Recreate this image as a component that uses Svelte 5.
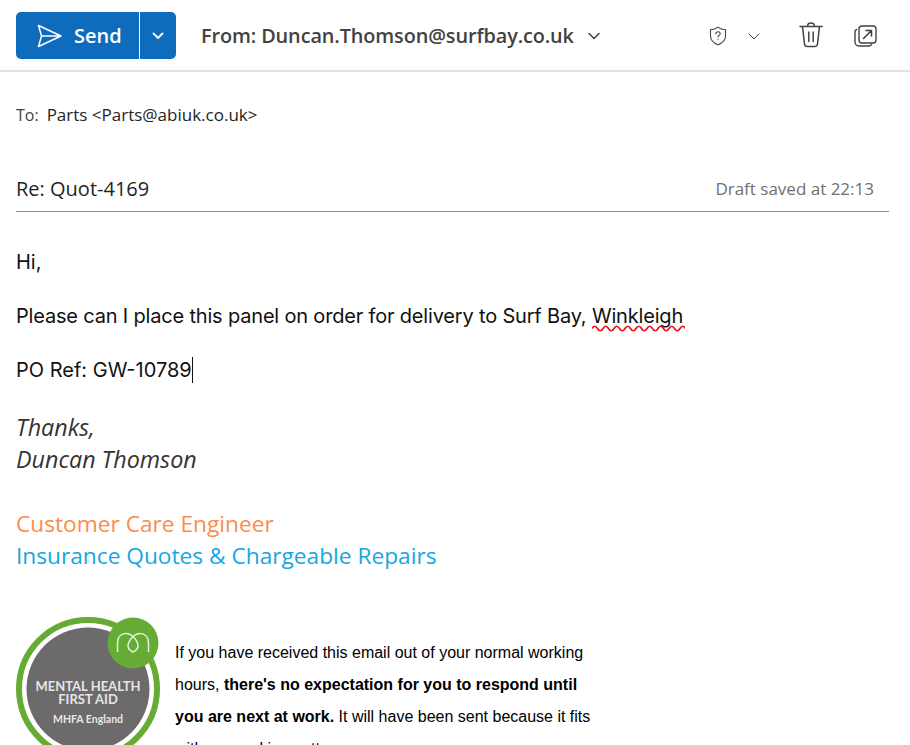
<script lang="ts">
	// Outlook-style reply compose pane
	const notice = 'If you have received this email out of your normal working';
	const wave = 'M0 3.500q2.750-4.500 5.500 0' + ' t5.500 0'.repeat(16);
</script>

<div class="pane">
	<header class="toolbar">
		<div class="send">
			<button class="send-main">
				<svg width="26" height="24" viewBox="0 0 26 24" fill="none" stroke="#fff" stroke-width="1.5" stroke-linejoin="round">
					<path d="M1.5 1.5 24 12 1.5 22.5 4.5 12ZM4.5 12H24" />
				</svg>
				<span>Send</span>
			</button>
			<button class="send-more" aria-label="More send options">
				<svg width="12" height="8" viewBox="0 0 12 8" fill="none" stroke="#fff" stroke-width="1.8" stroke-linecap="round" stroke-linejoin="round">
					<path d="M1.5 1.5 6 6l4.5-4.5" />
				</svg>
			</button>
		</div>
		<div class="from">
			<span>From: Duncan.Thomson@surfbay.co.uk</span>
			<svg width="12" height="8" viewBox="0 0 12 8" fill="none" stroke="#424242" stroke-width="1.5" stroke-linecap="round" stroke-linejoin="round">
				<path d="M1 1.5 6 6.5l5-5" />
			</svg>
		</div>
		<div class="actions">
			<div class="shield">
				<svg width="18" height="20" viewBox="0 0 18 20" fill="none" stroke="#424242" stroke-width="1.1">
					<path d="M9 1.2c2 1.7 4.500 2.500 7.500 2.600V10c0 4-2.500 6.800-7.500 8.800C4 16.800 1.500 14 1.500 10V3.800C4.500 3.700 7 2.900 9 1.200Z" />
					<path d="M6.800 7.800c0-1.300 1-2.100 2.200-2.100s2.200.8 2.200 2c0 1.700-2.200 1.700-2.200 3.400" stroke-linecap="round" />
					<circle cx="9" cy="13.600" r=".6" fill="#424242" stroke="none" />
				</svg>
				<svg class="caret" width="12" height="7" viewBox="0 0 12 7" fill="none" stroke="#424242" stroke-width="1" stroke-linecap="round" stroke-linejoin="round">
					<path d="M1 1l5 5 5-5" />
				</svg>
			</div>
			<svg class="trash" width="24" height="26" viewBox="0 0 24 26" fill="none" stroke="#424242" stroke-width="1.5" stroke-linecap="round" stroke-linejoin="round">
				<path d="M1 4.500h22M8.500 4.500C8.500 2.500 10 1 12 1s3.500 1.500 3.500 3.500M3.500 4.500l2 17.500c.2 1.500 1.200 2.500 2.800 2.500h7.400c1.600 0 2.600-1 2.800-2.500l2-17.500M9.800 10v9.500M14.200 10v9.500" />
			</svg>
			<svg width="23" height="22" viewBox="0 0 23 22" fill="none" stroke="#424242" stroke-width="1.4" stroke-linecap="round" stroke-linejoin="round">
				<rect x="5" y="1" width="17" height="17" rx="3" />
				<path d="M2.500 4.500C1.500 5 1 6 1 7v10c0 2.200 1.800 4 4 4h10c1 0 2-.5 2.500-1.500" />
				<path d="M9.500 13.500 17.500 5.500M12 5.500h5.500V11" stroke-width="1.600" />
			</svg>
		</div>
	</header>

	<div class="to"><span class="to-label">To:</span> <span>Parts &lt;Parts@abiuk.co.uk&gt;</span></div>

	<div class="subject">
		<span>Re: Quot-4169</span>
		<span class="saved">Draft saved at 22:13</span>
	</div>

	<main class="body">
		<p>Hi,</p>
		<p class="tight">Please can I place this panel on order for delivery to Surf Bay, <span class="misspelt">Winkleigh<svg class="squiggle" width="93" height="7" viewBox="0 0 93 7" fill="none" stroke="#e8101c" stroke-width="1.700"><path d={wave} /></svg></span></p>
		<p class="po">PO Ref: GW-10789<span class="cursor"></span></p>

		<div class="signoff">
			<div>Thanks,</div>
			<div>Duncan Thomson</div>
		</div>

		<div class="role">
			<div class="orange">Customer Care Engineer</div>
			<div class="blue">Insurance Quotes &amp; Chargeable Repairs</div>
		</div>

		<div class="footer">
			<svg class="badge" width="146" height="146" viewBox="0 0 146 146">
				<circle cx="72" cy="72" r="69" fill="#fff" stroke="#65ab34" stroke-width="6" />
				<circle cx="72" cy="72" r="61.500" fill="#6c6a6b" />
				<circle cx="117" cy="26" r="25.500" fill="#65ab34" />
				<path d="M101.500 35V26C101.500 20 105 16.500 110 16.500C115 16.500 122 23 122 29C122 32 119 34 117 35C115 34 112 32 112 29C112 23 119 16.500 124 16.500C129 16.500 132.500 20 132.500 26V35" fill="none" stroke="#e6f2dc" stroke-width="1.500" />
				<text x="72" y="74" class="b1">MENTAL HEALTH</text>
				<text x="72" y="87" class="b1">FIRST AID</text>
				<text x="72" y="106" class="b2">MHFA England</text>
			</svg>
			<p class="notice">
				{notice}<br />
				hours, <strong>there's no expectation for you to respond until</strong><br />
				<strong>you are next at work.</strong> It will have been sent because it fits<br />
				with my working pattern.
			</p>
		</div>
	</main>
</div>

<style>
	:global(body) {
		background: #fff;
	}

	.pane {
		height: 745px;
		overflow: hidden;
		background: #fff;
		font-family: "Open Sans", "Noto Sans", sans-serif;
		color: #242424;
	}

	.toolbar {
		height: 72px;
		box-sizing: border-box;
		border-bottom: 2px solid #e3e3e3;
		display: flex;
		align-items: flex-start;
		padding: 12px 0 0 16px;
	}

	.send {
		display: flex;
		width: 160px;
		height: 47px;
		border-radius: 5px;
		overflow: hidden;
		background: #0f6cbd;
	}

	.send button {
		border: 0;
		padding: 0;
		background: none;
		display: flex;
		align-items: center;
		color: #fff;
	}

	.send-main {
		width: 124px;
		padding-left: 21px !important;
		gap: 11px;
		font: 600 20px "Open Sans", sans-serif;
		border-right: 1px solid #fff !important;
	}

	.send-more {
		flex: 1;
		justify-content: center;
	}

	.from {
		margin-left: 25px;
		height: 47px;
		display: flex;
		align-items: center;
		gap: 14px;
		font-size: 19.850px;
		font-weight: 600;
		color: #424242;
		letter-spacing: -0.1px;
	}

	.actions {
		margin-left: auto;
		height: 47px;
		display: flex;
		align-items: center;
		padding-right: 33px;
	}

	.shield {
		display: flex;
		align-items: center;
		gap: 21px;
		margin-right: 39px;
	}

	.caret {
		margin-top: 2px;
	}

	.trash {
		margin-right: 31px;
		margin-top: -2px;
	}

	.to {
		margin: 31px 0 0 16px;
		height: 24px;
		font-size: 17px;
		line-height: 24px;
		color: #242424;
		display: flex;
		gap: 8px;
	}

	.to-label {
		font-size: 16px;
		color: #424242;
	}

	.subject {
		margin: 38px 21px 0 16px;
		height: 47px;
		box-sizing: border-box;
		border-bottom: 1px solid #8a8a8a;
		display: flex;
		justify-content: space-between;
		padding: 8px 15px 0 0;
		font-size: 20px;
		line-height: 31px;
	}

	.saved {
		font-size: 17px;
		color: #707070;
	}

	.body {
		padding: 0 0 0 16px;
		font-family: "Inter", "Noto Sans", sans-serif;
		font-size: 20px;
		color: #111;
	}

	.body p {
		margin: 0;
	}

	.body > p {
		line-height: 27px;
	}

	.body > p:first-child {
		margin-top: 37px;
	}

	.body > p + p {
		margin-top: 27px;
	}

	.tight {
		letter-spacing: -0.18px;
	}

	.misspelt {
		position: relative;
	}

	.squiggle {
		position: absolute;
		left: 0;
		bottom: -4px;
	}

	.cursor {
		display: inline-block;
		width: 1px;
		height: 26px;
		background: #111;
		vertical-align: -6px;
	}

	.signoff {
		margin-top: 27px;
		font-family: "Open Sans", sans-serif;
		font-style: italic;
		font-size: 23.300px;
		line-height: 32px;
		color: #333;
	}

	.role {
		margin-top: 33px;
		font-family: "Open Sans", sans-serif;
		font-size: 22.700px;
		line-height: 32px;
	}

	.orange {
		color: #fd8b4a;
	}

	.blue {
		color: #15a6e4;
	}

	.footer {
		margin-top: 45px;
		display: flex;
		align-items: flex-start;
	}

	.badge {
		flex-shrink: 0;
		margin-right: 13px;
	}

	.badge text {
		text-anchor: middle;
		fill: #e6e6e6;
		font-family: "Lato", sans-serif;
	}

	.b1 {
		font-size: 13px;
		font-weight: 700;
	}

	.b2 {
		font-size: 10.500px;
		font-weight: 700;
	}

	.notice {
		margin: 20px 0 0 !important;
		font-family: "Liberation Sans", Arial, sans-serif;
		font-size: 16px;
		line-height: 32px;
		color: #000;
		white-space: nowrap;
	}
</style>
